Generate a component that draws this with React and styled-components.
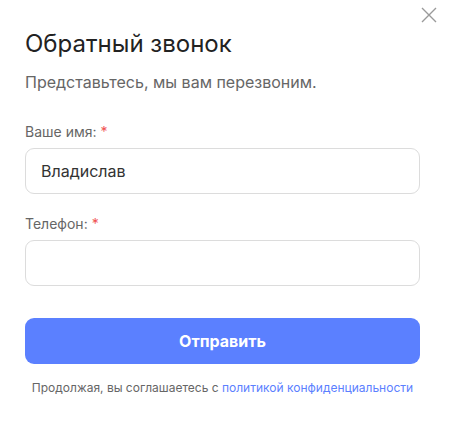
import React from 'react';
import styled, { createGlobalStyle } from 'styled-components';

const GlobalStyle = createGlobalStyle`
  html, body {
    margin: 0;
    padding: 0;
    background: #fff;
  }
  body {
    font-family: Inter, "Noto Sans", sans-serif;
    color: #222;
  }
`;

const Modal = styled.div`
  position: relative;
  width: 449px;
  height: 432px;
  box-sizing: border-box;
  padding: 29px 29px 0 25px;
  background: #fff;
`;

const CloseButton = styled.button`
  position: absolute;
  top: 6px;
  right: 11px;
  width: 18px;
  height: 18px;
  padding: 0;
  border: 0;
  background: none;
  color: #9a9a9a;
  cursor: pointer;
  svg {
    display: block;
  }
`;

const Title = styled.h2`
  margin: 0;
  font-size: 24px;
  line-height: 30px;
  font-weight: 400;
  color: #222;
`;

const Subtitle = styled.p`
  margin: 13px 0 0;
  font-size: 16px;
  line-height: 20px;
  color: #666;
`;

const Form = styled.form`
  display: flex;
  flex-direction: column;
  margin-top: 32px;
`;

const Field = styled.label`
  display: flex;
  flex-direction: column;
  gap: 8px;
  margin-bottom: 22px;
`;

const LabelText = styled.span`
  font-size: 14px;
  line-height: 16px;
  color: #666;
  span {
    color: #f05252;
  }
`;

const Input = styled.input`
  box-sizing: border-box;
  width: 100%;
  height: 46px;
  padding: 0 15px;
  border: 1px solid #dcdcdc;
  border-radius: 9px;
  font-family: Inter, "Noto Sans", sans-serif;
  font-size: 16px;
  color: #333;
  outline: none;
  background: #fff;
`;

const SubmitButton = styled.button`
  height: 46px;
  margin-top: 10px;
  border: 0;
  border-radius: 9px;
  background: #5b80ff;
  color: #fff;
  font-family: Inter, "Noto Sans", sans-serif;
  font-size: 16px;
  font-weight: 700;
  cursor: pointer;
`;

const Note = styled.p`
  margin: 16px 0 0;
  text-align: center;
  font-size: 12px;
  line-height: 15px;
  color: #666;
  a {
    color: #5b80ff;
    text-decoration: none;
  }
`;

const App = () => (
  <>
    <GlobalStyle />
    <Modal>
      <CloseButton type="button" aria-label="Закрыть">
        <svg width="18" height="18" viewBox="0 0 18 18" fill="none">
          <path d="M2 2L16 16M16 2L2 16" stroke="currentColor" strokeWidth="1.4" />
        </svg>
      </CloseButton>
      <Title>Обратный звонок</Title>
      <Subtitle>Представьтесь, мы вам перезвоним.</Subtitle>
      <Form onSubmit={e => e.preventDefault()}>
        <Field>
          <LabelText>Ваше имя: <span>*</span></LabelText>
          <Input defaultValue="Владислав" />
        </Field>
        <Field>
          <LabelText>Телефон: <span>*</span></LabelText>
          <Input type="tel" />
        </Field>
        <SubmitButton type="submit">Отправить</SubmitButton>
      </Form>
      <Note>
        Продолжая, вы соглашаетесь с <a href="#">политикой конфиденциальности</a>
      </Note>
    </Modal>
  </>
);

export default App;
